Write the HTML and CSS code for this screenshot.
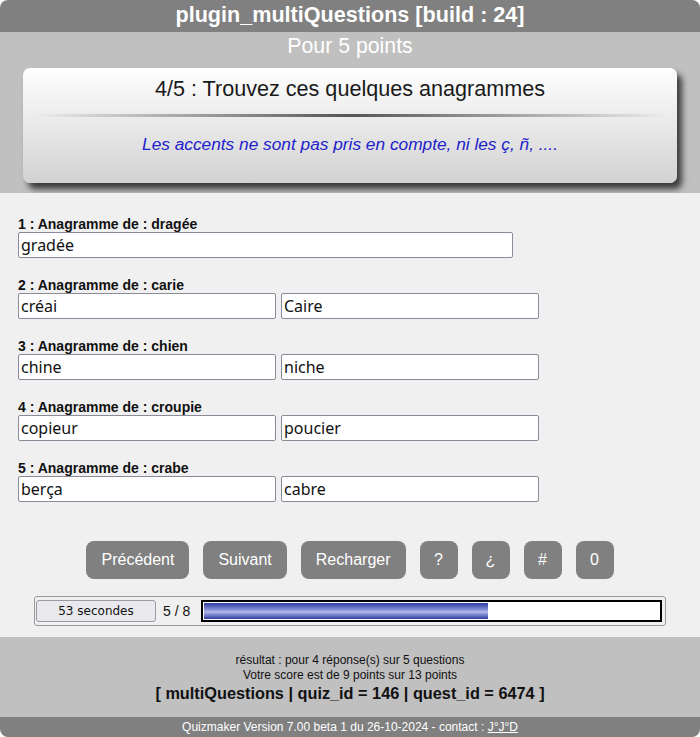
FILE: index.html
```html
<!DOCTYPE html>
<html lang="fr">
<head>
<meta charset="utf-8">
<title>plugin_multiQuestions</title>
<link rel="stylesheet" href="styles.css">
</head>
<body>
<div class="page">
  <header class="topbar">plugin_multiQuestions [build : 24]</header>
  <section class="intro">
    <div class="points">Pour 5 points</div>
    <div class="card">
      <h1 class="card-title">4/5 : Trouvez ces quelques anagrammes</h1>
      <div class="rule"></div>
      <p class="hint">Les accents ne sont pas pris en compte, ni les ç, ñ, ....</p>
    </div>
  </section>
  <main class="main">
    <div class="question">
      <div class="qlabel">1 : Anagramme de : dragée</div>
      <div class="inputs"><input class="field wide" value="gradée"></div>
    </div>
    <div class="question">
      <div class="qlabel">2 : Anagramme de : carie</div>
      <div class="inputs"><input class="field" value="créai"><input class="field" value="Caire"></div>
    </div>
    <div class="question">
      <div class="qlabel">3 : Anagramme de : chien</div>
      <div class="inputs"><input class="field" value="chine"><input class="field" value="niche"></div>
    </div>
    <div class="question">
      <div class="qlabel">4 : Anagramme de : croupie</div>
      <div class="inputs"><input class="field" value="copieur"><input class="field" value="poucier"></div>
    </div>
    <div class="question">
      <div class="qlabel">5 : Anagramme de : crabe</div>
      <div class="inputs"><input class="field" value="berça"><input class="field" value="cabre"></div>
    </div>

    <div class="buttons">
      <button class="btn">Précédent</button>
      <button class="btn">Suivant</button>
      <button class="btn">Recharger</button>
      <button class="btn sq">?</button>
      <button class="btn sq">¿</button>
      <button class="btn sq">#</button>
      <button class="btn sq">0</button>
    </div>

    <div class="progress">
      <button class="timer">53 secondes</button>
      <span class="count">5 / 8</span>
      <div class="bar"><div class="fill" style="width:62.5%"></div></div>
    </div>
  </main>
  <footer class="result">
    <div class="rline">résultat : pour 4 réponse(s) sur 5 questions</div>
    <div class="rline">Votre score est de 9 points sur 13 points</div>
    <div class="ids">[ multiQuestions | quiz_id = 146 | quest_id = 6474 ]</div>
  </footer>
  <div class="bottombar">Quizmaker Version 7.00 beta 1 du 26-10-2024 - contact : <a href="#">J°J°D</a></div>
</div>
</body>
</html>
```

FILE: styles.css
```css
html, body {
  margin: 0;
  padding: 0;
  background: #ffffff;
}
body {
  font-family: "Liberation Sans", Arial, sans-serif;
}
.page {
  width: 700px;
  height: 737px;
  display: flex;
  flex-direction: column;
}
.topbar {
  height: 32px;
  background: #808080;
  border-radius: 8px 8px 0 0;
  color: #fff;
  font-family: "Liberation Sans", Arial, sans-serif;
  font-weight: bold;
  font-size: 21.6px;
  line-height: 30px;
  text-align: center;
}
.intro {
  background: #c0c0c0;
  height: 161px;
  box-sizing: border-box;
  padding: 0 23px;
}
.points {
  color: #fff;
  font-size: 21.3px;
  line-height: 28px;
  text-align: center;
  height: 36px;
}
.card {
  height: 115px;
  box-sizing: border-box;
  border-radius: 7px;
  background: linear-gradient(#ffffff, #d2d2d2);
  box-shadow: 5px 6px 6px #3a3a3a;
  padding-top: 8px;
}
.card-title {
  margin: 0;
  font-weight: normal;
  font-size: 21.6px;
  line-height: 26px;
  color: #1a1a1a;
  text-align: center;
}
.rule {
  height: 3px;
  margin: 12px 12px 0;
  background: linear-gradient(to right, rgba(80,80,80,0), #444 50%, rgba(80,80,80,0));
  opacity: 0.9;
}
.hint {
  margin: 17px 0 0;
  text-align: center;
  font-style: italic;
  font-size: 17.3px;
  line-height: 20px;
  color: #2222cc;
}
.main {
  background: #f0f0f0;
  height: 444px;
  box-sizing: border-box;
  padding: 24px 18px 0;
}
.question {
  margin-bottom: 20px;
}
.qlabel {
  font-size: 14px;
  font-weight: bold;
  line-height: 15px;
  color: #111;
}
.inputs {
  display: flex;
  gap: 5px;
}
.field {
  width: 258px;
  height: 26px;
  box-sizing: border-box;
  border: 1px solid #8a8a98;
  border-radius: 2px;
  background: #fff;
  font-family: "Noto Sans", "Open Sans", sans-serif;
  font-size: 16px;
  color: #111;
  padding: 0 2px;
  margin: 0;
}
.field.wide {
  width: 495px;
}
.buttons {
  display: flex;
  justify-content: center;
  gap: 14px;
  margin-top: 39px;
}
.btn {
  height: 38px;
  padding: 0 15px;
  border: none;
  border-radius: 8px;
  background: #808080;
  color: #fff;
  font-family: "Liberation Sans", Arial, sans-serif;
  font-size: 16px;
  margin: 0;
}
.btn.sq {
  width: 38px;
  padding: 0;
}
.progress {
  margin: 17px 16px 0;
  height: 30px;
  box-sizing: border-box;
  border: 1px solid #9a9a9a;
  border-radius: 3px;
  display: flex;
  align-items: center;
  padding: 0 3px 0 1px;
}
.timer {
  width: 120px;
  height: 22px;
  margin: 0;
  padding: 0;
  border: 1px solid #9a9aa6;
  border-radius: 3px;
  background: #e9e9ed;
  font-family: "DejaVu Sans", Tahoma, sans-serif;
  font-size: 12px;
  color: #111;
}
.count {
  margin-left: 7px;
  width: 38px;
  font-size: 14px;
  color: #111;
}
.bar {
  flex: 1;
  height: 22px;
  box-sizing: border-box;
  border: 2px solid #000;
  background: #fff;
  padding: 1px;
}
.fill {
  height: 100%;
  background: linear-gradient(#2c3a9c, #8c96dc 45%, #b4bbee 55%, #2c3a9c);
}
.result {
  background: #c0c0c0;
  height: 80px;
  box-sizing: border-box;
  padding-top: 16px;
  text-align: center;
  color: #111;
}
.rline {
  font-size: 12px;
  line-height: 15px;
}
.ids {
  font-weight: bold;
  font-size: 16.3px;
  line-height: 20px;
}
.bottombar {
  height: 20px;
  background: #808080;
  border-radius: 0 0 8px 8px;
  color: #fff;
  font-size: 12px;
  line-height: 20px;
  text-align: center;
}
.bottombar a {
  color: #fff;
}
```
